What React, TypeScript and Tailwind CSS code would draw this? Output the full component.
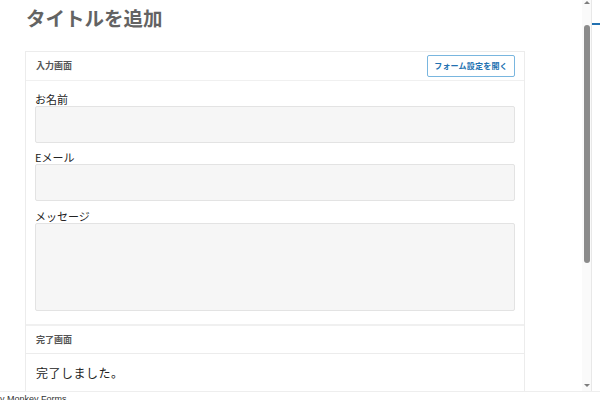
export default function App() {
  const jp = { fontFamily: '"Noto Sans CJK JP", "Noto Sans", sans-serif' };

  return (
    <div className="w-[600px] h-[400px] overflow-hidden bg-white flex flex-col" style={jp}>
      <div className="flex h-[391px]">
        {/* editor canvas */}
        <div className="w-[582px] overflow-hidden">
          <h1 className="pl-[26px] pt-[3px] text-[19.5px] leading-[30px] font-bold text-[#636363]">
            タイトルを追加
          </h1>

          <div className="ml-[25px] mt-[18px] w-[500px] border border-[#ececec] border-b-0">
            {/* 入力画面 */}
            <div className="flex items-center justify-between h-[29px] pl-[10px] pr-[9px] border-b border-[#f0f0f0]">
              <span className="text-[9px] font-bold text-[#555]">入力画面</span>
              <button className="h-[22px] w-[88px] border border-[#79b6df] rounded-[2px] text-[8px] font-bold text-[#2271b1] tracking-[0.2px]">
                フォーム設定を開く
              </button>
            </div>
            <div className="px-[9px] pt-[11px] pb-[13px] flex flex-col">
              <label className="text-[11px] leading-[14px] text-[#222]">お名前</label>
              <div className="h-[37px] bg-[#f6f6f6] border border-[#e3e3e3] rounded-[2px]" />
              <label className="mt-[7px] text-[11px] leading-[14px] text-[#222]">Eメール</label>
              <div className="h-[37px] bg-[#f6f6f6] border border-[#e3e3e3] rounded-[2px]" />
              <label className="mt-[8px] text-[11px] leading-[14px] text-[#222]">メッセージ</label>
              <div className="h-[88px] bg-[#f6f6f6] border border-[#e3e3e3] rounded-[2px]" />
            </div>

            {/* 完了画面 */}
            <div className="flex items-center h-[30px] pl-[10px] border-t-2 border-[#f0f0f0] border-b border-b-[#ececec]">
              <span className="text-[9px] font-bold text-[#555]">完了画面</span>
            </div>
            <div className="pl-[10px] pt-[11px] h-[40px]">
              <p className="text-[12px] leading-[16px] text-[#222] tracking-[0.5px]">完了しました。</p>
            </div>
          </div>
        </div>

        {/* scrollbar */}
        <div className="w-[9px] bg-[#fafafa] flex flex-col items-center">
          <div className="mt-[1px] w-0 h-0 border-l-[3px] border-r-[3px] border-b-[3px] border-l-transparent border-r-transparent border-b-[#7d7d7d]" />
          <div className="mt-[21px] w-[6px] h-[238px] rounded-full bg-[#8b8b8b]" />
          <div className="flex-1" />
          <div className="mb-[4px] w-0 h-0 border-l-[3px] border-r-[3px] border-t-[3px] border-l-transparent border-r-transparent border-t-[#7d7d7d]" />
        </div>

        {/* sidebar edge */}
        <div className="flex-1 border-l border-[#e8e8e8]">
          <div className="mt-[23px] h-[2px] bg-[#2271b1]" />
        </div>
      </div>

      <div className="flex-1 border-t border-[#eeeeee] overflow-hidden">
        <p className="-ml-[5px] pt-[1px] text-[9px] leading-[12px] text-[#333]" style={{ fontFamily: '"Liberation Sans", Arial, sans-serif' }}>
          by Monkey Forms
        </p>
      </div>
    </div>
  );
}
